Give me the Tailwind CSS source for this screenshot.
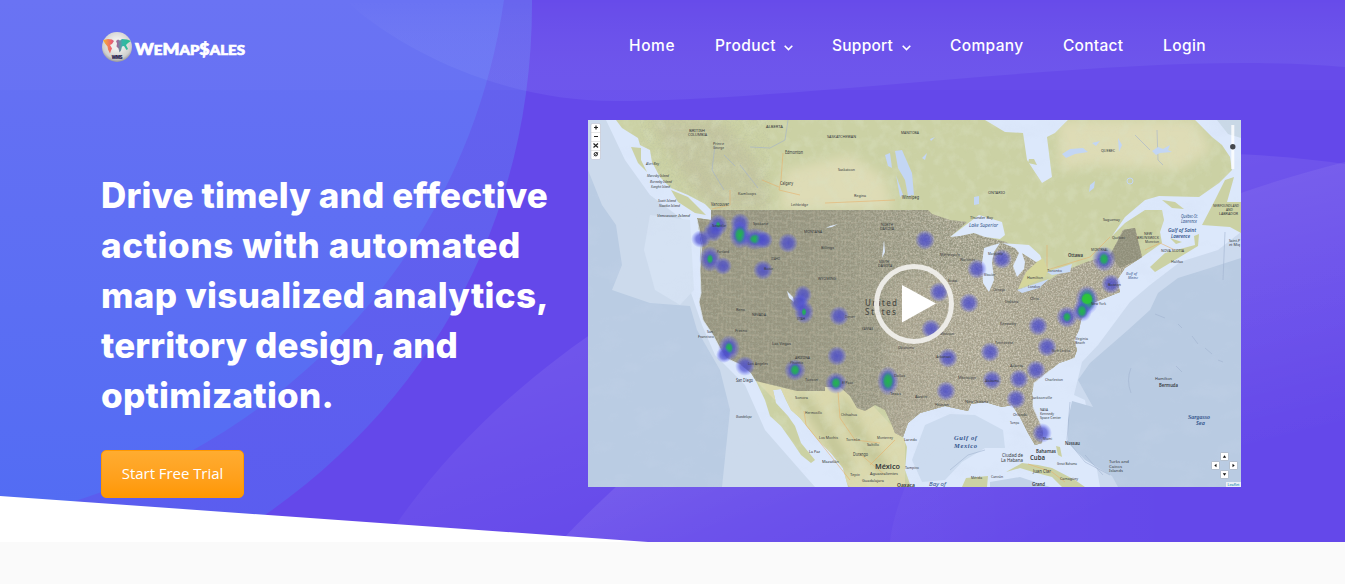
<!DOCTYPE html>
<html lang="en">
<head>
<meta charset="utf-8">
<title>WeMapSales</title>
<script src="https://cdn.jsdelivr.net/npm/@tailwindcss/browser@4"></script>
</head>
<body class="bg-[#fafafa] overflow-hidden font-['Inter',sans-serif]">
<section class="relative h-[542px] w-[1345px] overflow-hidden bg-[#6448ea]">
  <svg class="absolute inset-0" width="1345" height="542" viewBox="0 0 1345 542">
    <defs>
      <linearGradient id="inner" x1="0" y1="0" x2="0" y2="1"><stop offset="0" stop-color="#6871f3"/><stop offset="1" stop-color="#526cf3"/></linearGradient>
      <linearGradient id="outer" x1="0" y1="0" x2="0" y2="1"><stop offset="0" stop-color="#6662ee"/><stop offset="1" stop-color="#5a5def"/></linearGradient>
      <linearGradient id="top" x1="0" y1="0" x2="0" y2="1"><stop offset="0" stop-color="#fff" stop-opacity="0"/><stop offset="1" stop-color="#9aa0ff" stop-opacity=".13"/></linearGradient>
      <linearGradient id="mid" gradientUnits="userSpaceOnUse" x1="560" y1="330" x2="640" y2="560"><stop offset="0" stop-color="#fff" stop-opacity=".08"/><stop offset="1" stop-color="#fff" stop-opacity="0"/></linearGradient>
      <linearGradient id="low" gradientUnits="userSpaceOnUse" x1="700" y1="380" x2="820" y2="640"><stop offset="0" stop-color="#fff" stop-opacity=".11"/><stop offset="1" stop-color="#fff" stop-opacity="0"/></linearGradient>
      <linearGradient id="right" gradientUnits="userSpaceOnUse" x1="1240" y1="160" x2="1310" y2="440"><stop offset="0" stop-color="#fff" stop-opacity=".07"/><stop offset="1" stop-color="#fff" stop-opacity="0"/></linearGradient>
      <linearGradient id="fold" gradientUnits="userSpaceOnUse" x1="895" y1="0" x2="1180" y2="0"><stop offset="0" stop-color="#fff" stop-opacity=".03"/><stop offset="1" stop-color="#fff" stop-opacity="0"/></linearGradient>
    </defs>
    <path d="M532,0C533,220 430,400 265,515L200,542H0V0Z" fill="url(#outer)"/>
    <path d="M504,0C470,240 300,430 75,501L0,525V0Z" fill="url(#inner)"/>
    <path d="M345,0C400,50 500,101 615,101C780,101 1050,63 1245,63C1290,63 1320,65 1345,67V0Z" fill="url(#top)"/>
    <path d="M385,542L397,523C560,290 900,140 1200,153V542Z" fill="url(#mid)"/>
    <path d="M1200,153C1260,154 1300,158 1345,164V542H1200Z" fill="url(#right)"/>
    <path d="M560,542C750,340 1000,240 1200,204V542Z" fill="url(#low)"/>
    <path d="M1200,204L1241,193Q1290,176 1345,162V542H1200Z" fill="url(#right)"/>
    <path d="M890,542Q892,520 905,487H1200V542Z" fill="url(#fold)"/>
    <rect width="1345" height="90" fill="#fff" opacity=".02"/>
    <path d="M0,496L648,542H0Z" fill="#fff"/>
  </svg>

  <header class="relative flex h-[90px] items-center justify-between pl-[101px] pr-[139px] text-white">
    <a class="flex items-center gap-[1px] pt-[4px]">
      <svg width="32" height="32" viewBox="0 0 32 32">
        <defs>
          <radialGradient id="globe" cx=".5" cy=".4" r=".6"><stop offset=".3" stop-color="#efefed"/><stop offset=".8" stop-color="#cfcfcd"/><stop offset="1" stop-color="#96969c"/></radialGradient>
          <linearGradient id="world"><stop offset="0" stop-color="#f8b62e"/><stop offset=".3" stop-color="#ec6170"/><stop offset=".52" stop-color="#9a6c9c"/><stop offset=".7" stop-color="#35b5a9"/><stop offset="1" stop-color="#27c08a"/></linearGradient>
        </defs>
        <circle cx="16" cy="16" r="15" fill="url(#globe)"/>
        <path d="M2 9l5-1 4 .5 2 1.500-2 3-2 1 2 3.500-1 2-1 3-2-4-.5-3-2.500-3zM15 10l2-1.500 2 1 2-1.500 5 .5 4 1.500-3 2-2 2 2 4-1.500 1-2.500-4-2 .5-1 4-1.500 2-1-4-2-2 .5-3z" fill="url(#world)"/>
        <text x="10.500" y="28" class="font-black" font-size="4.500" fill="#29264f" textLength="11">WMS</text>
      </svg>
      <svg width="115" height="20" viewBox="0 0 115 20" class="mt-[8px]">
        <text x="1" y="14" fill="#fff" stroke="#fff" stroke-width=".7" font-family="Lato" font-weight="900" font-size="16" textLength="110" lengthAdjust="spacingAndGlyphs">W<tspan font-size="13.500">E</tspan>M<tspan font-size="13.500">AP</tspan>$<tspan font-size="13.500">ALES</tspan></text>
      </svg>
    </a>
    <nav class="flex items-center gap-[39px] pt-[2px] text-[15.5px] font-medium leading-6">
      <a class="w-[47px] tracking-[0.6px]">Home</a>
      <a class="flex w-[78px] items-center gap-[8px] whitespace-nowrap"><span class="w-[62px] tracking-[0.4px]">Product</span><svg class="mt-[4px] shrink-0" width="9" height="6" viewBox="0 0 9 6"><path d="M.7 .8L4.500 4.600 8.300 .8" fill="none" stroke="#fff" stroke-width="1.600"/></svg></a>
      <a class="flex w-[79px] items-center gap-[8px] whitespace-nowrap"><span class="w-[62px] tracking-[0.25px]">Support</span><svg class="mt-[4px] shrink-0" width="9" height="6" viewBox="0 0 9 6"><path d="M.7 .8L4.500 4.600 8.300 .8" fill="none" stroke="#fff" stroke-width="1.600"/></svg></a>
      <a class="w-[74px] tracking-[0.35px]">Company</a>
      <a class="w-[61px] tracking-[0.25px]">Contact</a>
      <a class="w-[43px] tracking-[0.4px]">Login</a>
    </nav>
  </header>

  <main class="relative flex pl-[101px] pt-[30px]">
    <div class="w-[487px] shrink-0 pt-[50px]">
      <h1 class="whitespace-nowrap text-[35px] font-extrabold leading-[50px] text-white">
        <span class="block" data-w="447">Drive timely and effective</span>
        <span class="block" data-w="420">actions with automated</span>
        <span class="block" data-w="448">map visualized analytics,</span>
        <span class="block" data-w="357">territory design, and</span>
        <span class="block" data-w="233">optimization.</span>
      </h1>
      <a class="mt-[30px] flex h-[48px] w-[143px] items-center justify-center rounded-[5px] border border-[#ff9800] bg-gradient-to-b from-[#ffac30] to-[#ff9800] font-['Open_Sans',sans-serif] text-[15px] text-white"><span class="whitespace-nowrap pb-[1px] tracking-[-0.05px]">Start Free Trial</span></a>
    </div>

    <svg width="653" height="367" viewBox="588 120 653 367" class="shrink-0" font-family="Noto Sans">
      <defs>
        <path id="us" d="M711,210H928L932,214L950,220L967,222L950,237L974,233L990,238L1006,242L1020,252L1037,262L1030,275L1017,290L1050,280L1060,273L1087,262L1110,255L1117,242L1123,230L1135,228L1142,257L1125,268L1117,280L1120,292L1095,302L1082,316L1079,330L1074,340L1077,350L1074,358L1059,363L1049,371L1034,383L1032,393L1033,407L1043,430L1042,443L1035,445L1028,433L1020,417L1012,405L1002,407L985,402L971,404L968,411L945,406L920,413L908,423L903,437L895,433L892,425L885,410L875,405L865,411L857,408L850,396L840,387H825V391H797L756,381L751,373L741,365L726,358L721,350L713,335L703,320L699,302L701,293L700,270L701,243L697,218L711,220Z"/>
        <clipPath id="usclip"><use href="#us"/></clipPath>
        <path id="land" d="M616,120L622,128L638,138L640,145L650,150L652,162L660,177L671,188L688,195L705,204L713,212L711,220L697,218L701,243L700,270L701,293L699,302L703,320L713,335L721,350L726,358L741,365L751,373L756,381L765,400L770,416L781,426L793,443L801,455L811,463L815,460L801,443L795,426L788,416L776,403L773,390L781,389L786,400L791,410L800,418L818,440L831,453L843,468L848,487H911L905,470L907,447L903,437L908,423L920,413L945,406L968,411L971,404L985,402L1002,407L1012,405L1020,417L1028,433L1035,445L1042,443L1043,430L1033,407L1032,393L1034,383L1049,371L1059,363L1074,358L1077,350L1074,340L1079,323L1095,302L1120,292L1117,280L1125,268L1142,257L1152,250L1162,243L1160,232L1164,220L1162,210L1145,210L1125,223L1112,236L1125,217L1145,200L1159,196L1199,197L1219,183L1232,170L1230,157L1222,145L1212,137L1195,120H1068L1055,133L1047,137L1052,177L1042,183L1027,160L1023,133L1005,132L985,120Z"/>
        <clipPath id="landclip"><use href="#land"/></clipPath>
        <filter id="speck" x="0" y="0" width="100%" height="100%"><feTurbulence type="fractalNoise" baseFrequency=".6" numOctaves="2" seed="4"/><feColorMatrix values="0 0 0 0 .8  0 0 0 0 .75  0 0 0 0 .65  1.6 0 0 0 -.6"/></filter>
        <filter id="dark" x="0" y="0" width="100%" height="100%"><feTurbulence type="fractalNoise" baseFrequency=".6" numOctaves="2" seed="9"/><feColorMatrix values="0 0 0 0 .42  0 0 0 0 .46  0 0 0 0 .36  3 0 0 0 -1.4"/></filter>
        <filter id="relief" x="0" y="0" width="100%" height="100%"><feTurbulence type="fractalNoise" baseFrequency=".09 .08" numOctaves="5" seed="7"/><feColorMatrix values="0 0 0 0 .7  0 0 0 0 .75  0 0 0 0 .54  3 0 0 0 -1.3"/></filter>
        <filter id="sea" x="0" y="0" width="100%" height="100%"><feTurbulence type="fractalNoise" baseFrequency=".03 .05" numOctaves="5" seed="2"/><feColorMatrix values="0 0 0 0 .62  0 0 0 0 .7  0 0 0 0 .85  3 0 0 0 -1.5"/></filter>
        <filter id="soft" x="-20%" y="-20%" width="140%" height="140%"><feGaussianBlur stdDeviation="6"/></filter>
        <pattern id="county" width="23" height="19" patternUnits="userSpaceOnUse"><path d="M0 4H9V0M9 4V12H17V19M17 12H23M0 14H5V19M5 14V9H9M13 0V7H23M17 7V3" fill="none" stroke="#c6c1ad" stroke-width=".6" opacity=".6"/></pattern>
        <radialGradient id="blue"><stop offset="0" stop-color="#4547cf" stop-opacity=".8"/><stop offset=".5" stop-color="#494bd0" stop-opacity=".68"/><stop offset="1" stop-color="#5a60ff" stop-opacity="0"/></radialGradient>
        <radialGradient id="green"><stop offset="0" stop-color="#22b84a"/><stop offset=".5" stop-color="#24a860" stop-opacity=".85"/><stop offset="1" stop-color="#3a60c0" stop-opacity="0"/></radialGradient>
        <linearGradient id="east"><stop offset=".25" stop-color="#fff" stop-opacity=".1"/><stop offset=".6" stop-color="#fff" stop-opacity="1"/></linearGradient>
        <mask id="eastmask"><rect x="690" y="200" width="460" height="250" fill="url(#east)"/></mask>
      </defs>
      <rect x="588" y="120" width="653" height="367" fill="#dce8fb"/>
      <path d="M588,120H606L625,160L650,195L690,225V290L702,325L715,355L745,385L765,430L800,470L815,487H588Z" fill="#ccdaec"/>
      <path d="M650,215L690,220L694,290L680,305L655,290L644,250Z" fill="#d5e2f3"/>
      <path d="M588,170L602,205L616,225L622,265L612,290L650,303L690,306L697,330L720,370L730,410L722,487H588Z" fill="#bacce3"/>
      <path d="M1241,232L1218,250L1180,262L1150,285L1130,302L1098,345L1082,362L1074,395L1085,400L1100,487H1241Z" fill="#ccdaee"/>
      <path d="M1241,258L1210,268L1178,278L1158,293L1150,310L1128,330L1090,363L1078,380L1093,407L1072,401L1068,420L1068,443L1085,460L1112,476L1118,487H1241Z" fill="#b9cbe2"/>
      <path d="M925,425L950,414L975,415L1003,430L1005,448L985,448L962,462L945,480L922,482L912,460Z" fill="#ccdbef"/>
      <path d="M990,482L1020,477L1050,487H990Z" fill="#c2d2e8"/>
      <path d="M1217,120L1228,134L1241,138V120Z" fill="#c9d8e6"/>
      <rect x="588" y="120" width="653" height="367" filter="url(#sea)" opacity=".15"/>
      <g fill="#cbd1a4">
        <use href="#land"/>
        <path d="M671,190L688,197L706,215L695,213L678,202ZM631,147L641,148L641,160L647,172L638,163ZM1150,267L1165,253L1195,245L1194,236L1199,234L1198,246L1175,260L1155,272ZM1202,225L1214,202L1225,180L1234,177L1227,202H1241V233L1230,227ZM962,487L966,478L988,476L987,487ZM1006,472L1022,463L1038,465L1052,468L1075,480L1085,487H1062L1052,477L1033,472L1020,468ZM1056,446L1060,447L1062,457L1058,455ZM1162,200L1175,202L1184,209L1172,208ZM1170,238L1182,242L1176,244ZM1029,159L1034,159L1037,165L1028,163Z"/>
      </g>
      <g clip-path="url(#landclip)">
        <path d="M785,170L850,155L885,178L893,210H780ZM1058,120H1195L1212,150L1180,170L1095,165L1060,170Z" fill="#dedcb6" filter="url(#soft)"/>
        <path d="M650,120H720L760,165L770,210H715L690,185Z" fill="#c0be9e" filter="url(#soft)" opacity=".6"/>
        <path d="M756,381H850L905,440V487H850L800,425Z" fill="#dbd9ae"/>
        <path d="M800,394L822,425L850,470M840,400L862,440L885,470" fill="none" stroke="#b8bd8c" stroke-width="9" filter="url(#soft)"/>
        <rect x="588" y="120" width="653" height="367" filter="url(#relief)" opacity=".35"/>
        <rect x="640" y="120" width="130" height="95" filter="url(#dark)" opacity=".22"/>
      </g>
      <g fill="none" stroke="#e8ae69" stroke-width=".7" opacity=".8"><path d="M783,153L781,180L779,190L800,195M712,209L730,205V190M779,187L762,180M825,203L895,200M1035,277L1047,270L1090,257L1110,237M1047,270V245M1145,250L1160,243L1175,250M804,411L806,425L822,445L850,480M838,392L840,418L855,440L880,443M870,465L895,440M860,454L885,475M1028,464L1052,472L1065,482"/></g>
      <g fill="none" stroke="#9fb0cf" stroke-width=".7" opacity=".8"><path d="M715,145L712,170L724,190M740,165L758,188M724,155L735,166M788,120L785,140L770,148L750,147M1157,130L1158,160L1163,165M1135,135L1150,150"/></g>
      <g fill="#c3d6f4">
        <path d="M895,151L902,150L912,173L914,195L908,196L905,180L898,168ZM885,155L890,153L892,168L888,166ZM896,175L903,195L900,197ZM1062,154L1070,149L1083,148L1088,152L1075,154L1066,158ZM1092,143L1100,141L1096,146ZM1090,185L1095,181L1094,188L1089,192ZM974,197L979,196L979,204L974,205ZM930,139L935,137L931,141ZM922,158L927,153L925,160ZM1152,151L1158,147L1163,149L1170,145L1168,150L1172,152L1160,153L1156,155ZM1118,138L1122,145L1119,152Z"/>
        <circle cx="1130" cy="181" r="3" fill="none" stroke="#c3d6f4"/>
      </g>
      <use href="#us" fill="#96947f"/>
      <g clip-path="url(#usclip)">
        <path d="M890,280L1000,260L1150,220V450H880Z" fill="#a8a28d" filter="url(#soft)" opacity=".7"/>
        <rect x="695" y="205" width="320" height="240" fill="url(#county)"/>
        <rect x="700" y="214" width="320" height="240" fill="url(#county)" opacity=".5" transform="translate(5 6)"/>
        <g mask="url(#eastmask)"><rect x="690" y="205" width="460" height="245" filter="url(#speck)"/></g>
        <rect x="690" y="205" width="460" height="245" filter="url(#dark)" opacity=".45"/>
        <path d="M1110,255L1125,228H1135L1142,258L1120,268Z" fill="#84856f" opacity=".6"/>
      </g>
      <g fill="#dde9fb">
        <path d="M950,237L979,215L1002,222L1005,235L1000,239L985,237L974,233L960,236ZM984,248L1000,243L994,252L992,262L994,280L989,292L983,283L982,263ZM1002,243L1029,245L1040,255L1042,260L1036,262L1022,253L1025,262L1024,269L1017,277L1013,266L1019,253L1015,248Z"/>
        <path d="M1047,272L1072,264L1070,272L1052,275ZM1017,290L1049,279L1039,288L1022,293Z" fill="#c9daf5"/>
        <path d="M787,291L793,297L794,302L789,298ZM838,224L830,226L826,228L832,227ZM884,240L885,252L882,258L883,250Z"/>
      </g>
      <path d="M1037,262L1043,258L1048,270L1045,277L1018,289L1026,272Z" fill="#d5d69c"/>
      <g fill="none" stroke="#dee9f8" stroke-width=".8"><path d="M697,219L702,243L700,270L701,293L699,302L703,320L713,335L721,350L726,358L741,365M1043,430L1033,407L1034,383L1049,371L1074,358"/></g>
      <g id="heat"></g>
      <g id="labels" fill="#34383c"></g>

      <g fill="none" stroke="#9fb2ce" stroke-width=".8" opacity=".7"><path d="M1070,402L1067,440L1085,462L1110,475M1131,368Q1126,380 1131,393M1155,314L1165,318M1178,324L1182,328M1192,336L1198,344M1205,348L1212,354M1218,360L1223,362M1176,366L1182,372M1225,232L1223,280M950,470L968,455L985,450M1085,455L1092,463L1103,475"/></g>

      <g>
        <rect x="591" y="123.500" width="9.500" height="36" rx="1.500" fill="#fff" stroke="#aab" stroke-width=".4"/>
        <path d="M591,132.500h9.500M591,141.500h9.500M591,150.500h9.500" stroke="#ccc" stroke-width=".5"/>
        <path d="M594,127.500h4M596,125.500v4M594,136.500h4M593.500,143.500l4.500,4M598,143.500l-4.500,4" stroke="#222" stroke-width="1.200"/>
        <circle cx="595.800" cy="154.200" r="1.700" fill="none" stroke="#222"/><path d="M594,156.200l4-4" stroke="#222" stroke-width=".8"/>
      </g>
      <rect x="1231.300" y="125" width="3" height="44" fill="#fff" opacity=".8"/><circle cx="1232.800" cy="146.800" r="2.700" fill="#45484d"/>
      <g fill="#fff" stroke="#8e9aab" stroke-width=".5"><rect x="1220.500" y="452.500" width="8" height="8" rx="1"/><rect x="1211.500" y="461.500" width="8" height="8" rx="1"/><rect x="1229.500" y="461.500" width="8" height="8" rx="1"/><rect x="1220.500" y="470.500" width="8" height="8" rx="1"/></g>
      <path d="M1222.800,457.700h3.400l-1.700-2.500zM1222.800,473.300h3.400l-1.700 2.500zM1216.500,463.800v3.400l-2.200-1.700zM1232.500,463.800v3.400l2.200-1.700z" fill="#111"/>
      <rect x="1226" y="482" width="15" height="5" fill="#fff" opacity=".7"/><text x="1227.500" y="486" font-size="4" textLength="12" lengthAdjust="spacingAndGlyphs" fill="#0078a8">Leaflet</text>
      <circle cx="914" cy="304" r="37.500" fill="none" stroke="#f4f3f0" stroke-width="5" opacity=".9"/>
      <path d="M902,285V322.500L936,303.500Z" fill="#fff"/>
    </svg>
  </main>
</section>
<script>
const NS = 'http://www.w3.org/2000/svg';
const add = (parent, tag, attrs, text) => {
  const el = document.createElementNS(NS, tag);
  for (const k in attrs) el.setAttribute(k, attrs[k]);
  if (text) el.textContent = text;
  document.getElementById(parent).appendChild(el);
};
// Heat points: x, y, rx, ry, green core radius
[[718,225,9,10,3],[713,232,9,9,0],[701,239,9,8,0],[740,223,9,9,0],[740,235,10,13,7],[755,239,14,10,7],[764,240,8,8,0],[788,243,9,9,0],[710,259,10,12,4],[723,266,8,8,0],[763,270,9,9,0],[803,295,8,9,0],[799,303,8,8,0],[804,312,9,11,3],[839,316,9,9,0],[729,348,10,12,5],[724,355,7,7,0],[745,366,9,9,0],[795,370,10,10,6],[837,356,9,9,0],[836,383,10,10,6],[888,381,10,14,7],[925,240,9,9,0],[977,269,9,9,0],[1002,259,9,9,0],[1104,259,11,12,6],[1111,284,9,9,0],[1087,300,11,14,9],[1082,311,9,10,6],[1067,317,10,10,5],[939,292,9,9,0],[969,303,9,9,0],[931,329,9,9,0],[1038,326,9,9,0],[1047,347,9,9,0],[990,352,9,9,0],[948,358,9,9,0],[1036,370,9,9,0],[1019,379,9,9,0],[992,380,9,9,0],[946,391,9,9,0],[1016,399,9,9,0],[1042,433,9,9,0]]
.forEach(([x, y, rx, ry, g]) => {
  add('heat', 'ellipse', {cx: x, cy: y, rx: rx + 1, ry: ry + 1, fill: 'url(#blue)'});
  if (g) add('heat', 'ellipse', {cx: x, cy: y, rx: g, ry: Math.round(g * ry / rx * 10) / 10 + 1, fill: 'url(#green)'});
});
add('heat', 'circle', {cx: 1087, cy: 299, r: 5, fill: '#2fd02c', opacity: .7});
// Place names: text, x, y, width, font size, style (1 island, 2 water)
[['BRITISH',689,132,16,4],['COLUMBIA',688,136,19,4],['ALBERTA',766,128,17,4],['SASKATCHEWAN',827,138,29,4],['MANITOBA',901,134,18,4],['ONTARIO',988,194,17,4],['QUEBEC',1101,152,14,4],['Prince',713,145,11,4],['George',713,149,11,4],['Edmonton',785,154,18,4.5],['Saskatoon',838,171,17,4],['Calgary',780,185,13,4.5],['Regina',854,197,12,4],['Winnipeg',902,199,17,4.5],['Kamloops',738,195,18,4],['Lethbridge',791,206,17,4],['Vancouver',711,206,18,4.5],['Alert Bay',646,165,13,4,1],['Moresby Island',647,177,22,4,1],['Burnaby Island',650,183,22,4,1],['Kunghit Island',651,188,19,4,1],['Scott Island',658,202,18,4,1],['Nootka Island',659,207,21,4,1],['Vancouver Island',657,217,33,4,1],['Thunder Bay',970,219,23,4],['Lake Superior',969,227,29,4.5,2],['Saguenay',1103,221,17,4],['Québec',1112,239,13,4],['Ottawa',1068,257,15,6],['MONTREAL',1091,251,17,4],['NEW',1144,235,8,4],['BRUNSWICK',1137,239,22,4],['Moncton',1145,243,14,4],['NOVA SCOTIA',1161,252,23,4],['Halifax',1171,263,12,4],['Québec-St.',1181,218,17,4.5,2],['Lawrence',1181,223,16,4.5,2],['Gulf of Saint',1168,232,28,5,2],['Lawrence',1171,237.5,19,5,2],['NEWFOUNDLAND',1213,207,26,4],['AND',1226,211,7,4],['LABRADOR',1219,215,19,4],['Saint-P',1229,242,11,4],['et Miq',1229,246,11,4],['Toronto',1047,272,15,4],['Hamilton',1027,279,16,4],['London',1028,288,12,4],['Gulf of',1126,275,11,4,2],['Maine',1128,279,10,4,2],['Milwaukee',984,276,11,4],['Marquette',988,255,15,4],['New York',1091,305,15,4],['Boston',1108,286,13,4],['Virginia',1075,339.5,13,4],['Beach',1075,344,10,4],['Charleston',1045,381,18,4],['Jacksonville',1032,399,20,4],['NASA',1040,411,8,3.5],['Kennedy',1040,415,14,3.5],['Space Center',1040,419,21,3.5],['Miami',1043,440,9,4],['Tampa',1010,424,9,4],['Orlando',1013,416,14,4],['Bahamas',1036,453,20,5],['Nassau',1065,445,15,5],['Ciudad de',1002,456.5,21,4.5],['La Habana',1001,461.5,22,4.5],['Cuba',1030,460,15,6.5],['Great Bahama',1057,465,20,4],['Camagüey',1060,480,18,4],['Juan Clar',1033,473,18,4.5],['Turks and',1109,463,20,4],['Caicos',1109,467.5,13,4],['Islands',1109,472,14,4],['Hamilton',1155,380,17,4],['Bermuda',1159,387,19,5],['Gulf of',954,440,23,6.5,2],['Mexico',954,447.5,23,6.5,2],['Sargasso',1188,419,22,5.5,2],['Sea',1196,425,9,5,2],['Grand',1032,486,13,5],['Mérida',971,479,11,4],['Cancún',991,478,12,4],['San',707,333,6,4],['Francisco',698,337.5,16,4],['San Diego',736,382,17,4.5],['Guadalupe',736,418,16,4,1],['Phoenix',790,364,13,4],['Tucson',805,381,13,4],['Seattle',712,227,14,4],['Spokane',753,225,15,4],['Portland',717,253,12,4],['Boise',764,270,9,4],['MONTANA',804,233,18,4],['Billings',821,249,13,4],['NORTH',881,226,12,4],['DAKOTA',880,230,14,4],['SOUTH',879,263,10,4],['DAKOTA',878,267,14,4],['IDAHO',771,260,9,4],['WYOMING',818,280,18,4],['UTAH',797,320,8,4],['Denver',845,318,10,4],['NEVADA',752,316,14,4],['Reno',736,311,9,4],['Fresno',735,332,12,4],['Las Vegas',772,345,19,4],['Los Angeles',748,365,20,4],['ARIZONA',795,359,15,4],['El Paso',842,384,11,4],['KANSAS',862,330,11,4],['Chihuahua',841,416,16,4],['Hermosillo',805,414,17,4],['Sonora',795,399,13,4],['Los Mochis',819,439,19,4],['Torreón',846,441,14,4],['Monterrey',877,439,16,4],['Durango',853,456,15,4.5],['Saltillo',867,446,12,4],['La Paz',809,453,11,4],['Mazatlán',822,463,17,4],['México',875,469,25,6.5],['Aguascalientes',870,475,28,4],['Tepic',850,476,10,4],['Guadalajara',862,482,22,4],['Tampico',905,469,14,4],['Laredo',904,441,13,4],['Minneapolis',940,256,20,4],['Wisconsin',960,261,15,4],['Chicago',993,291,12,4],['Iowa',948,282,9,4],['Indiana',1005,303,13,4],['Ohio',1030,300,9,4],['Kentucky',1000,325,16,4],['Tennessee',995,344,18,4],['Atlanta',1010,367,13,4],['Alabama',985,382,14,4],['Mississippi',958,379,18,4],['Arkansas',936,358,15,4],['New Orleans',965,403,23,4],['Houston',935,406,14,4],['Austin',915,398,12,4],['Texas',890,395,11,4],['Dallas',894,377,11,4],['Oklahoma',898,349,16,4],['North Carolina',1052,352,18,4],['Missouri',940,335,14,4],['Oaxaca',897,486.5,18,5],['Bay of',929,486,17,4.5,2]]
.forEach(([t, x, y, w, s, k]) => add('labels', 'text', {x, y, 'font-size': s, textLength: w, lengthAdjust: s > 6 && k ? 'spacing' : 'spacingAndGlyphs', fill: k === 2 ? '#34558c' : '#34383c', 'font-style': k ? 'italic' : 'normal', 'font-weight': s > 4.9 ? 600 : 400, 'font-family': k === 2 && s > 5 ? 'Liberation Serif' : 'Noto Sans'}, t));
add('labels', 'text', {x: 865, y: 306, 'font-size': 8, textLength: 32, fill: '#4c4c46', 'font-weight': 500}, 'United');
add('labels', 'text', {x: 865, y: 314.5, 'font-size': 8, textLength: 31, fill: '#4c4c46', 'font-weight': 500}, 'States');
// Spread each headline line evenly over its measure
addEventListener('load', () => document.querySelectorAll('[data-w]').forEach(el => {
  const r = document.createRange();
  r.selectNodeContents(el.firstChild);
  el.style.letterSpacing = ((el.dataset.w - r.getBoundingClientRect().width) / el.textContent.length) + 'px';
}));
</script>
</body>
</html>
